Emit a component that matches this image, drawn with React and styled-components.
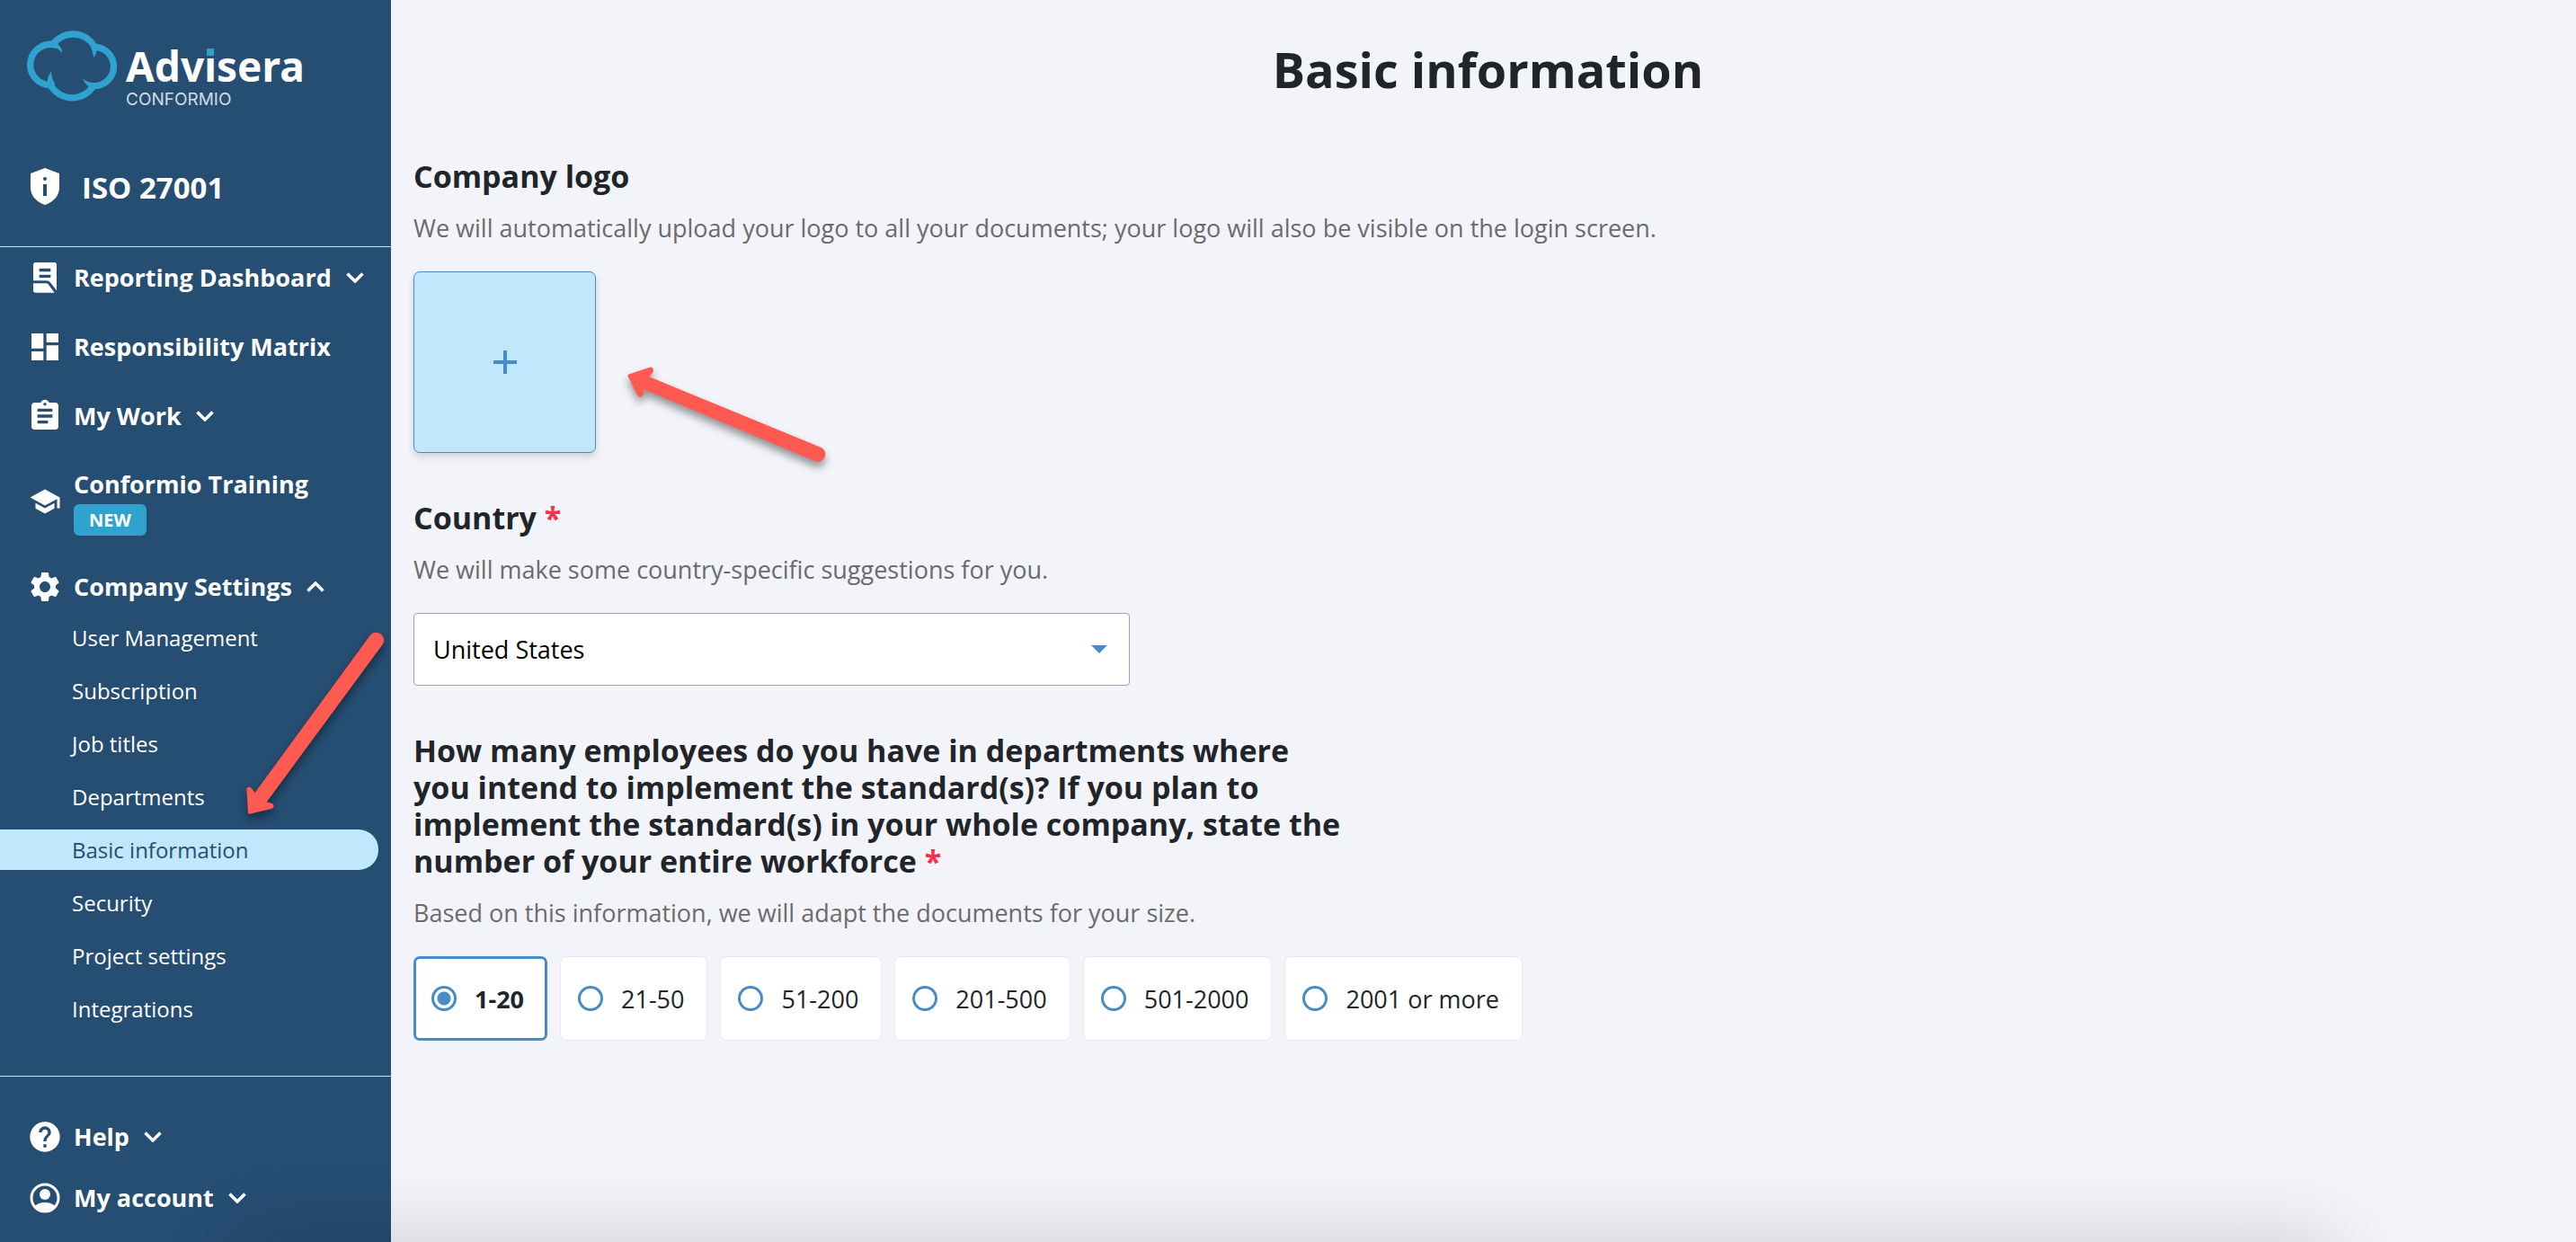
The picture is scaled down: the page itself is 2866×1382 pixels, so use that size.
import React, { useState } from "react";
import styled, { createGlobalStyle } from "styled-components";
import {
  MdDashboard,
  MdAssignment,
  MdSchool,
  MdSettings,
  MdHelp,
} from "react-icons/md";


const GlobalStyle = createGlobalStyle`
  * {
    box-sizing: border-box;
  }

  body {
    margin: 0;
    background: #f3f4f9;
    color: #212529;
    font-family: "Open Sans", "Noto Sans", sans-serif;
  }

  button, select, input {
    font-family: inherit;
  }
`;

const Page = styled.div`
  display: flex;
  min-height: 100vh;
`;

const Sidebar = styled.aside`
  flex: 0 0 435px;
  display: flex;
  flex-direction: column;
  background: #264d72;
  color: #fff;
`;

const Logo = styled.a`
  display: flex;
  gap: 8px;
  padding: 34px 30px 0;
  height: 154px;
  color: #fff;
  text-decoration: none;
`;

const Cloud = styled.svg`
  width: 102px;
  height: 80px;
`;

const LogoText = styled.span`
  display: flex;
  flex-direction: column;
  padding-top: 12px;
`;

const LogoName = styled.span`
  font-family: "Noto Sans", sans-serif;
  font-size: 46px;
  font-weight: 700;
  line-height: 55px;
`;

const DottedLetter = styled.span`
  position: relative;

  &::after {
    content: "";
    position: absolute;
    left: 3px;
    top: 12px;
    width: 8px;
    height: 8px;
    background: #30a2cf;
    box-shadow: 0 0 0 3px #264d72;
  }
`;

const LogoProduct = styled.span`
  font-family: Inter, sans-serif;
  font-size: 19px;
  line-height: 20px;
  color: #d3dce4;
`;

const Standard = styled.div`
  display: flex;
  align-items: center;
  gap: 24px;
  height: 121px;
  padding: 0 0 12px 33px;
  font-size: 33px;
  font-weight: 700;
  border-bottom: 1px solid #c1e7fc;
`;

const Menu = styled.nav`
  display: flex;
  flex-direction: column;
  gap: 37px;
  padding-top: 14px;
`;

const MenuItem = styled.button`
  display: flex;
  align-items: center;
  gap: 12px;
  min-height: 40px;
  padding: 0 30px;
  border: 0;
  background: none;
  color: #fff;
  font-size: 27px;
  font-weight: 700;
  line-height: 38px;
  text-align: left;
  white-space: nowrap;
  cursor: pointer;
`;

const IconSlot = styled.span`
  display: flex;
  justify-content: center;
  flex: 0 0 40px;
`;

const Badge = styled.span`
  display: block;
  width: 81px;
  margin-top: 3px;
  border-radius: 6px;
  background: #30a2cf;
  font-size: 20px;
  line-height: 35px;
  text-align: center;
`;

const Chevron = styled.svg`
  width: 20px;
  height: 12px;
  margin-left: 4px;
  transform: ${(props) => (props.$up ? "rotate(180deg)" : "none")};
`;

const SubMenu = styled.ul`
  position: relative;
  display: flex;
  flex-direction: column;
  gap: 14px;
  margin: 14px 0 52px;
  padding: 0 14px 0 0;
  list-style: none;
`;

const SubLink = styled.a`
  display: block;
  padding-left: 80px;
  border-radius: 0 22px 22px 0;
  background: ${(props) => (props.$active ? "#c1e7fc" : "transparent")};
  color: ${(props) => (props.$active ? "#264d72" : "#fff")};
  font-size: 24px;
  line-height: 45px;
  text-decoration: none;
`;

const SidebarFooter = styled.div`
  display: flex;
  flex-direction: column;
  gap: 28px;
  padding: 47px 0 28px;
  border-top: 1px solid #c1e7fc;
`;

const Arrow = styled.svg`
  position: absolute;
  left: ${(props) => props.$left}px;
  top: ${(props) => props.$top}px;
  fill: #ff5a52;
  stroke: #ff5a52;
  stroke-linejoin: round;
  overflow: visible;
  pointer-events: none;
  filter: drop-shadow(0 6px 5px rgba(0, 0, 0, 0.4));
`;

const Content = styled.main`
  flex: 1;
  padding: 37px 15px 40px 25px;
`;

const PageTitle = styled.h1`
  margin: 0 0 59px;
  font-size: 54px;
  font-weight: 700;
  line-height: 80px;
  text-align: center;
`;

const Section = styled.section`
  margin-bottom: 52px;
`;

const Heading = styled.h2`
  display: block;
  max-width: 1040px;
  margin: 0 0 19px;
  font-size: 34px;
  font-weight: 700;
  line-height: 41px;
`;

const Required = styled.span`
  color: #ff2d4d;
`;

const Hint = styled.p`
  margin: 0 0 30px;
  color: #6b6b6b;
  font-size: 27px;
  line-height: 36px;
`;

const UploadRow = styled.div`
  position: relative;
`;

const UploadButton = styled.button`
  display: flex;
  align-items: center;
  justify-content: center;
  width: 203px;
  height: 202px;
  border: 1px solid #488bc8;
  border-radius: 7px;
  background: #c1e7fc;
  box-shadow: 0 4px 8px rgba(0, 0, 0, 0.15);
  cursor: pointer;
`;

const SelectBox = styled.div`
  position: relative;
  max-width: 797px;

  &::after {
    content: "";
    position: absolute;
    right: 25px;
    top: 36px;
    border: 9px solid transparent;
    border-top-color: #488bc8;
    border-bottom: 0;
    pointer-events: none;
  }
`;

const Select = styled.select`
  appearance: none;
  display: block;
  width: 100%;
  height: 81px;
  padding: 0 60px 0 21px;
  border: 1px solid #a0a2a7;
  border-radius: 4px;
  background: #fff;
  color: #000;
  font-size: 27px;
`;

const Options = styled.div`
  display: flex;
  flex-wrap: wrap;
  gap: 14px;
`;

const Option = styled.label`
  display: flex;
  align-items: center;
  gap: 20px;
  height: 94px;
  padding: 0 26px 0 20px;
  border-radius: 7px;
  background: #fff;
  box-shadow: inset 0 0 0 ${(props) => (props.$checked ? "3px #488bc8" : "1px #e6e8ec")};
  font-size: 27px;
  font-weight: ${(props) => (props.$checked ? 700 : 400)};
  cursor: pointer;
`;

const Radio = styled.input`
  appearance: none;
  width: 28px;
  height: 28px;
  margin: 0;
  border: 3px solid #488bc8;
  border-radius: 50%;
  background: #fff;

  &:checked {
    background: radial-gradient(circle, #488bc8 7px, #fff 8px);
  }
`;

// soft shade along the bottom edge of the window
const BottomShade = styled.div`
  position: fixed;
  top: 100%;
  left: 270px;
  right: 270px;
  height: 200px;
  box-shadow: 0 0 90px rgba(0, 0, 0, 0.17);
  pointer-events: none;
`;


const subItems = [
  "User Management",
  "Subscription",
  "Job titles",
  "Departments",
  "Basic information",
  "Security",
  "Project settings",
  "Integrations",
];

const sizes = ["1-20", "21-50", "51-200", "201-500", "501-2000", "2001 or more"];


const CloudIcon = () => (
  <Cloud viewBox="89 103 306 240" aria-hidden="true">
    <g fill="none" stroke="#30a2cf" strokeWidth="22">
      <path d="M188 152A68 68 0 1 0 168 285" />
      <path d="M175 150A83 83 0 0 1 315 157" />
      <path d="M315 158A65 65 0 1 1 312 288" />
      <path d="M165 280A83 83 0 0 0 310 289" />
    </g>
    <g fill="#30a2cf">
      <path d="M180 141Q204 150 208 179Q190 160 172 158Z" />
      <path d="M323 150Q324 176 312 194Q309 174 302 158Z" />
      <path d="M315 298Q286 292 274 263Q294 280 318 277Z" />
      <path d="M157 288Q154 260 170 239Q172 266 184 284Z" />
    </g>
  </Cloud>
);

const ShieldIcon = () => (
  <svg width="34" height="42" viewBox="0 0 34 42" aria-hidden="true">
    <path fill="#fff" d="M17 0L33 6V22C33 31 26 38 17 41C8 38 1 31 1 22V6Z" />
    <circle cx="17" cy="12" r="2" fill="#264d72" />
    <path fill="#264d72" d="M15 18H19V31H15Z" />
  </svg>
);

const ReportIcon = () => (
  <svg width="26" height="34" viewBox="0 0 78 102" aria-hidden="true">
    <path
      fill="#fff"
      d="M8 0H70Q78 0 78 8V94L58 68Q53 61 45 61H0V8Q0 0 8 0ZM20 20V31H58V20ZM20 41V51H58V41Z"
      fillRule="evenodd"
    />
    <path fill="#fff" d="M0 70H43Q48 70 51 74L71 101H8Q0 101 0 93Z" />
  </svg>
);

const AccountIcon = () => (
  <svg width="34" height="34" viewBox="0 0 34 34" aria-hidden="true">
    <circle cx="17" cy="17" r="15" fill="none" stroke="#fff" strokeWidth="3" />
    <circle cx="17" cy="13" r="6" fill="#fff" />
    <path fill="#fff" d="M5 27Q9 22 17 22Q25 22 29 27Q24 33 17 33Q10 33 5 27Z" />
  </svg>
);

const ChevronIcon = ({ up }) => (
  <Chevron $up={up} viewBox="0 0 40 24" aria-hidden="true">
    <path d="M3 3L20 20L37 3" fill="none" stroke="#fff" strokeWidth="7" />
  </Chevron>
);


const App = () => {
  const [size, setSize] = useState("1-20");
  const [open, setOpen] = useState(true);

  return (
    <Page>
      <GlobalStyle />
      <Sidebar>
        <Logo href="#">
          <CloudIcon />
          <LogoText>
            <LogoName>
              Adv<DottedLetter>i</DottedLetter>sera
            </LogoName>
            <LogoProduct>CONFORMIO</LogoProduct>
          </LogoText>
        </Logo>
        <Standard>
          <ShieldIcon />
          ISO 27001
        </Standard>
        <Menu>
          <MenuItem>
            <IconSlot><ReportIcon /></IconSlot>
            Reporting Dashboard
            <ChevronIcon />
          </MenuItem>
          <MenuItem>
            <IconSlot><MdDashboard size={40} /></IconSlot>
            Responsibility Matrix
          </MenuItem>
          <MenuItem>
            <IconSlot><MdAssignment size={40} /></IconSlot>
            My Work
            <ChevronIcon />
          </MenuItem>
          <MenuItem>
            <IconSlot><MdSchool size={36} /></IconSlot>
            <span>
              Conformio Training
              <Badge>NEW</Badge>
            </span>
          </MenuItem>
          <MenuItem aria-expanded={open} onClick={() => setOpen(!open)}>
            <IconSlot><MdSettings size={40} /></IconSlot>
            Company Settings
            <ChevronIcon up={open} />
          </MenuItem>
        </Menu>
        {open && (
          <SubMenu>
            {subItems.map((item) => (
              <li key={item}>
                <SubLink href="#" $active={item === "Basic information"}>{item}</SubLink>
              </li>
            ))}
            <Arrow $left={270} $top={13} width="160" height="217" viewBox="810 300 480 651" strokeWidth="8" aria-hidden="true">
              <path d="M832 913L827 834Q831 828 838 836L851 853L1238 324A20 20 0 0 1 1273 350L884 879L905 885Q913 890 907 895Z" />
            </Arrow>
          </SubMenu>
        )}
        <SidebarFooter>
          <MenuItem>
            <IconSlot><MdHelp size={40} /></IconSlot>
            Help
            <ChevronIcon />
          </MenuItem>
          <MenuItem>
            <IconSlot><AccountIcon /></IconSlot>
            My account
            <ChevronIcon />
          </MenuItem>
        </SidebarFooter>
      </Sidebar>

      <Content>
        <PageTitle>Basic information</PageTitle>

        <Section>
          <Heading>Company logo</Heading>
          <Hint>
            We will automatically upload your logo to all your documents; your logo will also be visible on the login screen.
          </Hint>
          <UploadRow>
            <UploadButton aria-label="Upload logo">
              <svg width="26" height="26" viewBox="0 0 26 26" aria-hidden="true">
                <path d="M13 0V26M0 13H26" stroke="#488bc8" strokeWidth="4" />
              </svg>
            </UploadButton>
            <Arrow $left={230} $top={98} width="240" height="135" viewBox="690 400 240 135" strokeWidth="3" aria-hidden="true">
              <path d="M700 418L724 410Q727 411 724 415L720 420L912 499A6 6 0 0 1 908 512L715 431L714 439Q712 442 710 438Z" />
            </Arrow>
          </UploadRow>
        </Section>

        <Section>
          <Heading as="label" htmlFor="country">
            Country <Required>*</Required>
          </Heading>
          <Hint>We will make some country-specific suggestions for you.</Hint>
          <SelectBox>
            <Select id="country" defaultValue="United States">
              <option>United States</option>
              <option>Canada</option>
              <option>United Kingdom</option>
            </Select>
          </SelectBox>
        </Section>

        <Section>
          <Heading id="employees">
            How many employees do you have in departments where you intend to implement the standard(s)? If you plan to
            implement the standard(s) in your whole company, state the number of your entire workforce{" "}
            <Required>*</Required>
          </Heading>
          <Hint>Based on this information, we will adapt the documents for your size.</Hint>
          <Options role="radiogroup" aria-labelledby="employees">
            {sizes.map((item) => (
              <Option key={item} $checked={item === size}>
                <Radio
                  type="radio"
                  name="size"
                  value={item}
                  checked={item === size}
                  onChange={() => setSize(item)}
                />
                {item}
              </Option>
            ))}
          </Options>
        </Section>
      </Content>
      <BottomShade />
    </Page>
  );
};

export default App;
